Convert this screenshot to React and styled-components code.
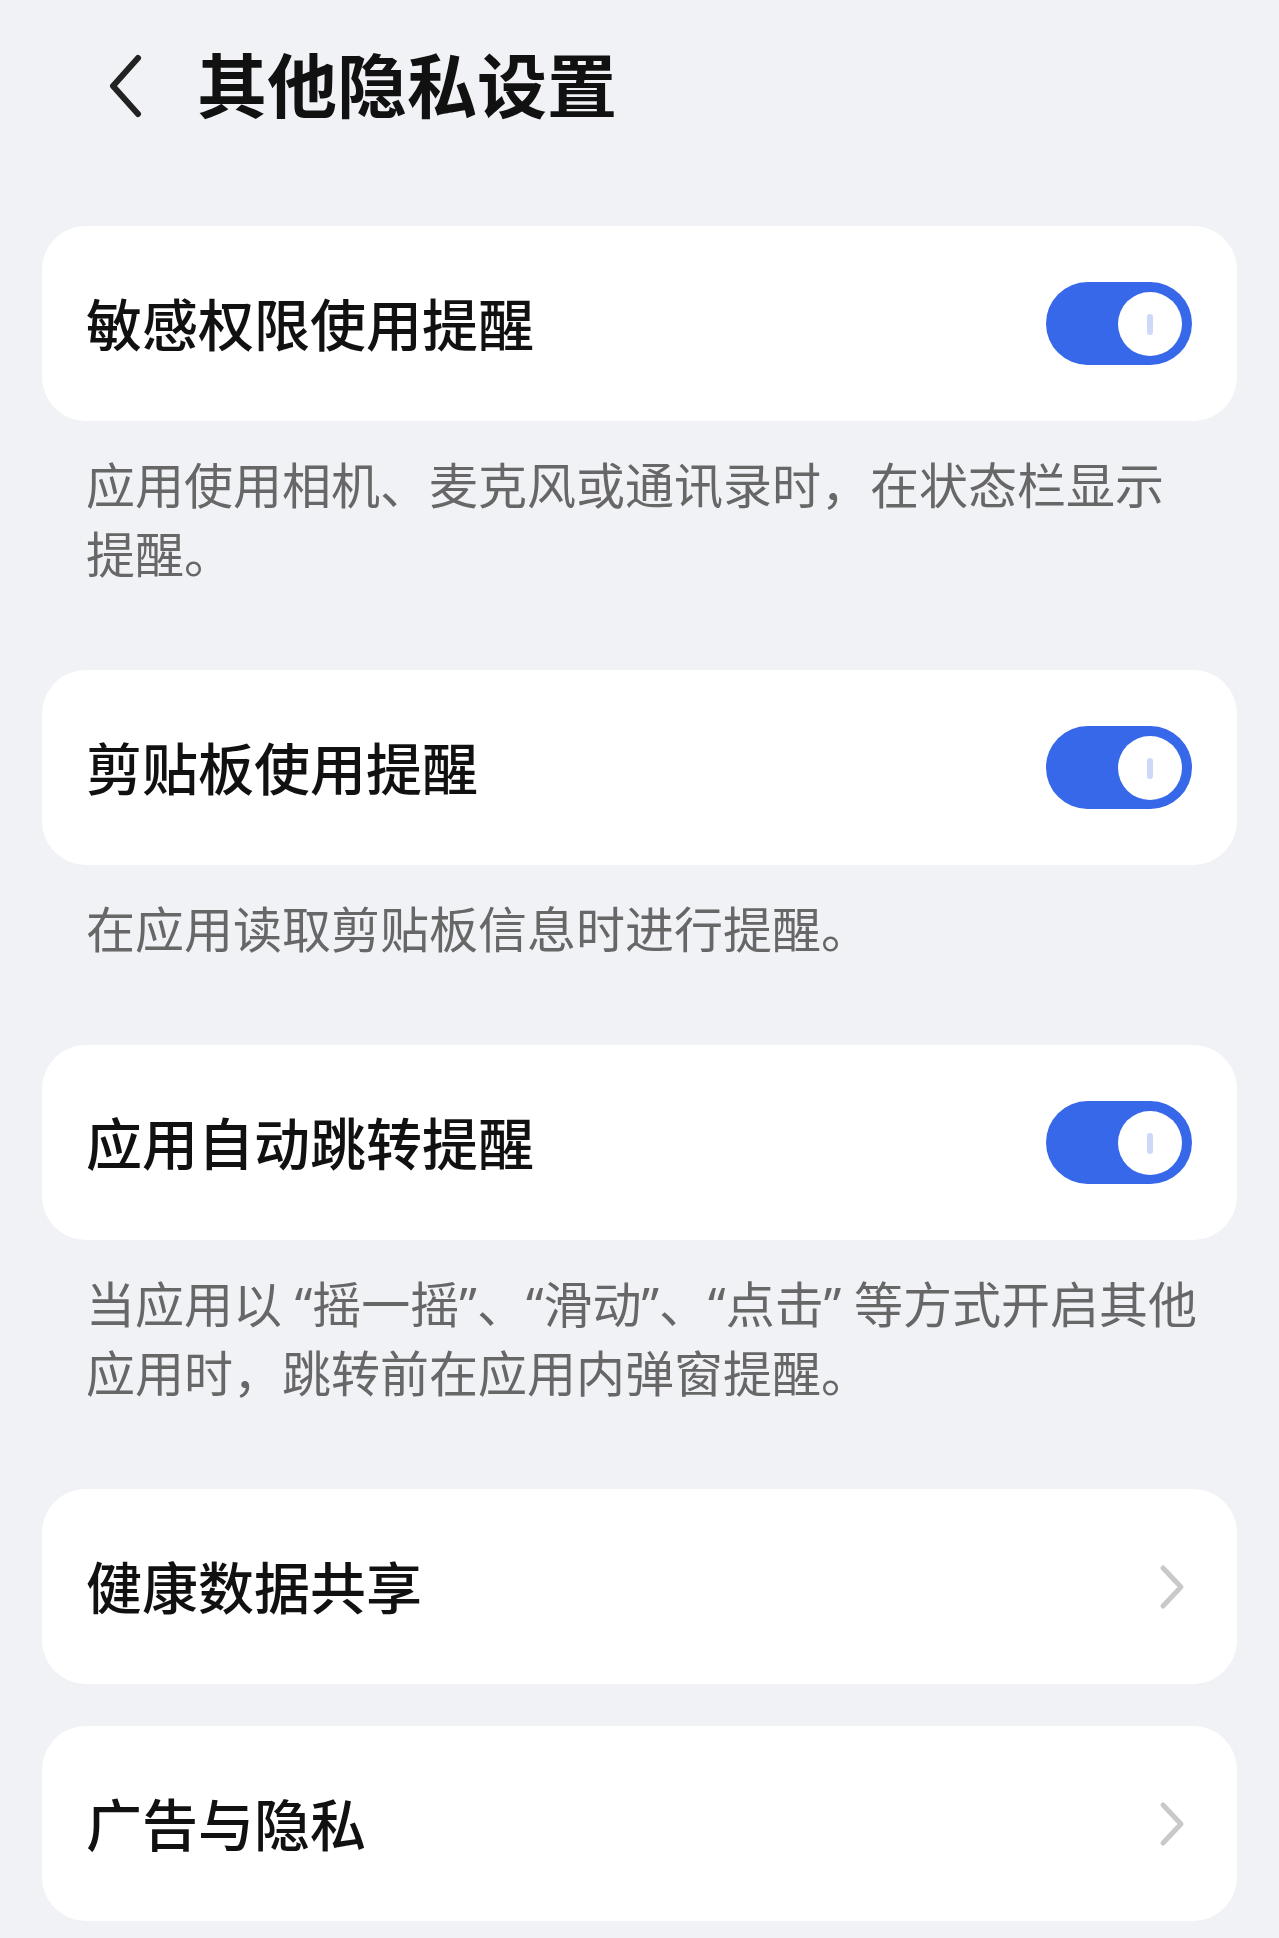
import React from "react";
import styled, { createGlobalStyle } from "styled-components";

const GlobalStyle = createGlobalStyle`
  html, body {
    margin: 0;
    padding: 0;
    background: #f1f2f6;
  }
  body {
    font-family: "Noto Sans", "Noto Sans CJK SC", sans-serif;
    color: #111;
  }
`;

const sections = [
  {
    title: "敏感权限使用提醒",
    toggle: true,
    note: "应用使用相机、麦克风或通讯录时，在状态栏显示提醒。",
  },
  {
    title: "剪贴板使用提醒",
    toggle: true,
    note: "在应用读取剪贴板信息时进行提醒。",
  },
  {
    title: "应用自动跳转提醒",
    toggle: true,
    note: "当应用以 “摇一摇”、“滑动”、“点击” 等方式开启其他应用时，跳转前在应用内弹窗提醒。",
  },
  { title: "健康数据共享" },
  { title: "广告与隐私" },
];

export default function App() {
  return (
    <Page>
      <GlobalStyle />
      <Header>
        <BackButton aria-label="返回">
          <svg width="36" height="64" viewBox="0 0 36 64">
            <path
              d="M31 4 L6 32 L31 60"
              fill="none"
              stroke="#222"
              strokeWidth="6"
              strokeLinecap="round"
              strokeLinejoin="round"
            />
          </svg>
        </BackButton>
        <Title>其他隐私设置</Title>
      </Header>
      <List>
        {sections.map((s, i) => (
          <Group key={i} hasNote={!!s.note}>
            <Card>
              <Label>{s.title}</Label>
              {s.toggle ? <Toggle /> : <Chevron />}
            </Card>
            {s.note && <Note>{s.note}</Note>}
          </Group>
        ))}
      </List>
    </Page>
  );
}

const Page = styled.div`
  min-height: 1938px;
  padding: 0 42px;
  background: #f1f2f6;
`;

const Header = styled.header`
  display: flex;
  align-items: center;
  height: 172px;
  padding-left: 65px;
  gap: 54px;
`;

const BackButton = styled.div`
  display: flex;
  align-items: center;
  width: 36px;
  height: 64px;
`;

const Title = styled.h1`
  margin: 0;
  font-size: 70px;
  font-weight: 700;
  color: #111;
  line-height: 1;
`;

const List = styled.div`
  display: flex;
  flex-direction: column;
  margin-top: 54px;
`;

const Group = styled.section`
  margin-bottom: ${(p) => (p.hasNote ? "81px" : "42px")};
`;

const Card = styled.div`
  display: flex;
  align-items: center;
  justify-content: space-between;
  height: 195px;
  padding: 0 45px 0 44px;
  background: #fff;
  border-radius: 44px;
  box-sizing: border-box;
`;

const Label = styled.div`
  font-size: 56px;
  font-weight: 500;
  color: #111;
  line-height: 1;
`;

const Note = styled.p`
  margin: 0;
  padding: 30px 30px 0 44px;
  font-size: 49px;
  line-height: 69px;
  color: #676767;
`;

const Track = styled.div`
  position: relative;
  width: 146px;
  height: 83px;
  border-radius: 42px;
  background: #3868ea;
  flex-shrink: 0;
`;

const Knob = styled.div`
  position: absolute;
  right: 10px;
  top: 10px;
  width: 64px;
  height: 64px;
  border-radius: 50%;
  background: #fff;
  display: flex;
  align-items: center;
  justify-content: center;

  &::after {
    content: "";
    width: 6px;
    height: 21px;
    border-radius: 3px;
    background: #cdd9f6;
  }
`;

function Toggle() {
  return (
    <Track>
      <Knob />
    </Track>
  );
}

const ChevronBox = styled.div`
  display: flex;
  align-items: center;
  margin-right: 6px;
`;

function Chevron() {
  return (
    <ChevronBox>
      <svg width="28" height="46" viewBox="0 0 28 46">
        <path
          d="M5 4 L23 23 L5 42"
          fill="none"
          stroke="#c9c9c9"
          strokeWidth="5"
          strokeLinecap="round"
          strokeLinejoin="round"
        />
      </svg>
    </ChevronBox>
  );
}
